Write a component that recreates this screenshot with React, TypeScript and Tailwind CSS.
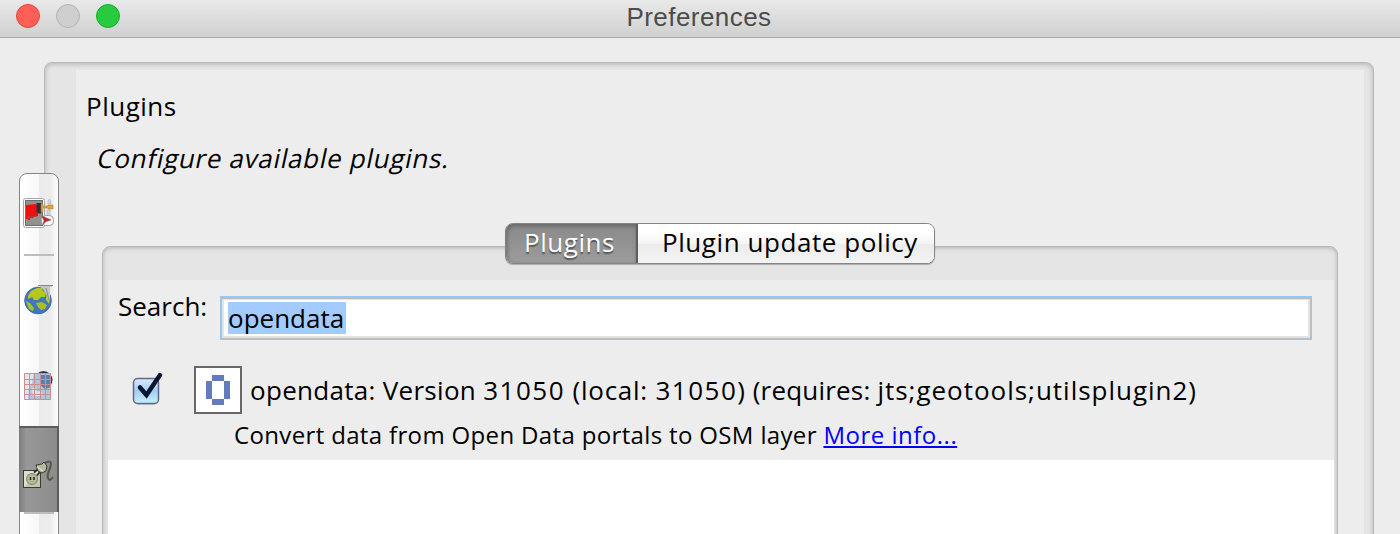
import type { ReactNode } from "react";

const FONT = "font-['Open_Sans','Noto_Sans',sans-serif]";

function TitleBar() {
  return (
    <header className="relative flex h-[38px] shrink-0 items-start border-b border-[#a9a9a9] bg-linear-to-b from-[#e9e9e9] to-[#d0d0d0]">
      <div className="flex gap-4 pt-1 pl-4">
        <span className="size-6 rounded-full border border-[#e2463f] bg-[#ff5f57]" />
        <span className="size-6 rounded-full border border-[#b4b4b4] bg-[#cfcfcf]" />
        <span className="size-6 rounded-full border border-[#14ae26] bg-[#28cb40]" />
      </div>
      <h1 className="absolute inset-x-0 top-0 pr-0.5 text-center font-['Liberation_Sans',sans-serif] text-[26px] leading-[34px] tracking-[0.45px] text-[#4c4c4c]">
        Preferences
      </h1>
    </header>
  );
}

function DisplayIcon() {
  return (
    <svg width="32" height="32" viewBox="0 0 32 32">
      <rect x="1.500" y=".5" width="21" height="29" rx="2" fill="#fff" stroke="#a5a5a5" />
      <rect x="3.500" y="2.500" width="17" height="25" fill="#8f928f" stroke="#6d6f6d" />
      <path d="M4 7l10-1 2 3v9l-4 1-1 1-3 0v2H6v-1H4z" fill="#ee1010" />
      <path d="M5 18h7v1H8v1H5z" fill="#b53a3a" />
      <path d="M14.500 5h4.500v10.500h-3v-1h-1.500z" fill="#2e3338" />
      <path d="M19 6h2v2h5v-1h5v4h-5v-1h-5v4h-2z" fill="#dda24a" stroke="#a8742a" strokeWidth=".5" />
      <path d="M26 6V3l1.500-2L29 3v3zM25 12h3v6h-3z" fill="#d5d5d5" stroke="#aaa" strokeWidth=".5" />
      <rect x="19.500" y="17.500" width="12" height="10" rx="4" fill="#f7f7f7" stroke="#a0a0a0" />
      <path d="M20 18l9 4-5 1.500-3 3 1-4z" fill="#d3202a" stroke="#555" strokeWidth=".5" />
    </svg>
  );
}

function GlobeIcon() {
  return (
    <svg width="32" height="32" viewBox="0 0 32 32">
      <circle cx="16" cy="17.500" r="13.300" fill="#4377bd" stroke="#3b6aab" />
      <path d="M6 13l3-5 6-3 5 0 1 3 3 2-1 4-4 0-3 3-4 0-2-3-4 2z" fill="#b5c822" />
      <path d="M14 20l6-1 5 3-2 4-4 1-3-3zM4 18l4 2 4 5-1 3-4-2z" fill="#a9c028" />
      <path d="M24 13l4 3-1 5-3-4z" fill="#b5c822" />
      <path d="M18 2h12v2h-2v13h-2l-2-6-3-5-3-2z" fill="#c4c4c0" />
      <path d="M16 2.500h15M24 5l3 12" stroke="#8a8a84" strokeWidth="1" />
    </svg>
  );
}

function GridIcon() {
  return (
    <svg width="32" height="32" viewBox="0 0 32 32">
      <circle cx="21.500" cy="10" r="9" fill="#333b48" />
      <rect x="2" y="3" width="27" height="27" fill="#b4c3d8" />
      <path d="M2 3h10l-2 10-3 5-1 12H2z" fill="#e3e6ee" />
      <path d="M18 5h11v12l-6 2-5-4z" fill="#5d7fab" />
      <path d="M9 19l4-2 2 4 5 1-2 4-7 0z" fill="#d8deea" />
      <path d="M2.500 3.500h26v26h-26zM7.500 3v27M12.500 3v27M18.500 3v27M23.500 3v27M2 9.500h27M2 14.500h27M2 19.500h27M2 24.500h27" fill="none" stroke="#cc8e93" />
    </svg>
  );
}

function PlugIcon() {
  return (
    <svg width="32" height="32" viewBox="0 0 32 32">
      <rect x="1.500" y="13.500" width="17" height="17" fill="#c3c8ad" stroke="#393c2e" />
      <path d="M2 14h16L15 17H5v10l-3 3z" fill="#dde0cb" />
      <circle cx="10" cy="22" r="5.500" fill="#b3b89c" stroke="#82876e" />
      <path d="M8.500 20v3M12 20v3" stroke="#222" strokeWidth="1.500" />
      <path d="M12 15.500l5-4M15 18.500l4-5" stroke="#2c2e26" strokeWidth="1.800" />
      <path d="M14 8l6-1 2-2 3 4-1 5-4 2-4-2z" fill="#b6baa0" stroke="#3a3c30" />
      <path d="M15 10l6 4" stroke="#e0e3cf" strokeWidth="1.500" />
      <path d="M23 6c4-2 6-2 6 1 0 5-5 10-3 14 1 3 3 2 5-1" fill="none" stroke="#55584a" strokeWidth="2" />
    </svg>
  );
}

function SideTab({ children, selected = false }: { children?: ReactNode; selected?: boolean }) {
  return (
    <div
      className={
        selected
          ? "-mx-px flex h-[86px] shrink-0 items-center border-t-2 border-r-2 border-[#5d5d5d] bg-linear-to-r from-[#7c7c7c] via-[#989898] via-20% to-[#8c8c8c] pt-1.5 pl-[3px]"
          : "flex h-20 items-center pl-0.5"
      }
    >
      {children}
    </div>
  );
}

function SideBar() {
  return (
    <nav className="z-10 mt-[135px] ml-[19px] flex h-[380px] w-10 shrink-0 flex-col rounded-t-lg border border-[#858585] bg-[linear-gradient(to_right,#fff_10%,#f7f7f7_50%,#ebebeb_50%,#ececec_80%,#fff)]">
      <SideTab><DisplayIcon /></SideTab>
      <div className="mx-1 h-0.5 shrink-0 bg-[#bdbdbd]" />
      <div className="flex h-[86px] items-center"><SideTab><GlobeIcon /></SideTab></div>
      <div className="flex h-[84px] items-center pt-1"><SideTab><GridIcon /></SideTab></div>
      <SideTab selected><PlugIcon /></SideTab>
      <div className="mx-1 h-0.5 shrink-0 bg-[#bdbdbd]" />
    </nav>
  );
}

function Tabs() {
  return (
    <div className="z-10 -mb-[18px] flex h-[41px] w-[430px] self-center rounded-lg border border-[#858585] bg-white text-[26px] leading-[37px] shadow-[0_1px_1px_#aaa]">
      <span className="w-[132px] rounded-l-[7px] border-r-2 border-[#5d5d5d] bg-linear-to-b from-[#8a8a8a] to-[#9c9c9c] pl-[18px] tracking-[0.55px] text-white shadow-[inset_1px_2px_4px_#666] text-shadow-[0_2px_1px_#555]">Plugins</span>
      <span className="grow rounded-r-[7px] bg-[linear-gradient(#fff_20%,#f5f5f5_50%,#ebebeb_50%,#f4f4f4)] pl-6 tracking-[0.57px]">Plugin update policy</span>
    </div>
  );
}

function PluginRow() {
  return (
    <div className="flex flex-col">
      <div className="flex h-12 items-center">
        <svg className="ml-6 shrink-0" width="36" height="40" viewBox="0 0 36 40">
          <defs>
            <linearGradient id="check" x2="0" y2="1">
              <stop stopColor="#d8e9fa" />
              <stop offset=".5" stopColor="#a3cdf5" />
              <stop offset="1" stopColor="#c9f0ff" />
            </linearGradient>
          </defs>
          <rect x="2" y="10" width="25" height="25" rx="5" fill="#ccc" />
          <rect x="1.500" y="8.500" width="25" height="25" rx="4" fill="url(#check)" stroke="#606987" strokeWidth="1.500" />
          <path d="M8 17.500l6.500 7.500L28 5" fill="none" stroke="#07162f" strokeWidth="4.500" strokeLinecap="round" />
        </svg>
        <span className="ml-[26px] flex size-12 shrink-0 items-center justify-center border-2 border-[#686868] bg-white">
          <svg width="24" height="30" viewBox="0 0 24 30" fill="#647bc0" shapeRendering="crispEdges">
            <path d="M6 0h12v6H6zM0 6h6v18H0zM18 6h6v18h-6zM6 24h12v6H6z" />
          </svg>
        </span>
        <span className="ml-2 text-[26px]">
          <span className="tracking-[0.3px]">opendata: Version </span>
          <span className="tracking-[1.5px]">31050</span>
          <span className="tracking-[0.75px]"> (local: </span>
          <span className="tracking-[1.5px]">31050</span>
          <span className="tracking-[0.5px]">) </span>
          <span className="tracking-[0.2px]">(requires: </span>
          <span className="tracking-[0.98px]">jts;geotools;utilsplugin2)</span>
        </span>
      </div>
      <p className="mt-1 ml-[126px] text-2xl leading-[34px] tracking-[0.35px]">
        Convert data from Open Data portals to OSM layer <a className="tracking-[0.5px] text-[#0000ff] underline">More info...</a>
      </p>
    </div>
  );
}

export default function App() {
  return (
    <div className={`${FONT} flex h-[534px] w-[1400px] flex-col overflow-hidden bg-[#ededed] whitespace-nowrap text-black`}>
      <TitleBar />
      <div className="flex min-h-0 grow">
        <SideBar />
        <section className="mt-6 -ml-[15px] h-[500px] w-[1330px] shrink-0 rounded-t-lg border border-[#b9b9b9] bg-[#e5e5e5] pt-[7px] pr-[9px] pl-[31px] shadow-[inset_0_1px_5px_#b0b0b0]">
          <div className="flex h-full flex-col bg-[#ededed] px-[26px]">
            <h2 className="mt-[18px] -ml-4 text-[26px] leading-9 tracking-[0.5px]">Plugins</h2>
            <p className="mt-4 -ml-1 -skew-x-12 self-start text-[26px] leading-9 tracking-[0.7px]">Configure available plugins.</p>
            <div className="h-[47px]" />
            <Tabs />
            <div className="grow rounded-t-lg border border-[#b9b9b9] bg-[#e5e5e5] pt-[33px] pr-[3px] pl-[5px] shadow-[inset_0_1px_4px_#b0b0b0]">
              <div className="h-[180px] bg-[#ededed] pt-4">
                <div className="flex h-11 pr-[22px] pl-2.5">
                  <label className="-mt-0.5 w-[102px] text-[26px] leading-6">Search:</label>
                  <div className="flex grow items-start border border-[#98c8f4] bg-white pt-[5px] pl-[7px] shadow-[inset_0_0_0_1px_#bdbdbd,inset_0_1px_0_1px_#bdbdbd,inset_0_0_0_3px_#e3e3e3]">
                    <span className="h-8 w-[118px] bg-[#a3cbff] text-[26px] leading-8">opendata</span>
                  </div>
                </div>
                <div className="h-[26px]" />
                <PluginRow />
              </div>
              <div className="h-24 bg-white" />
            </div>
          </div>
        </section>
      </div>
    </div>
  );
}
